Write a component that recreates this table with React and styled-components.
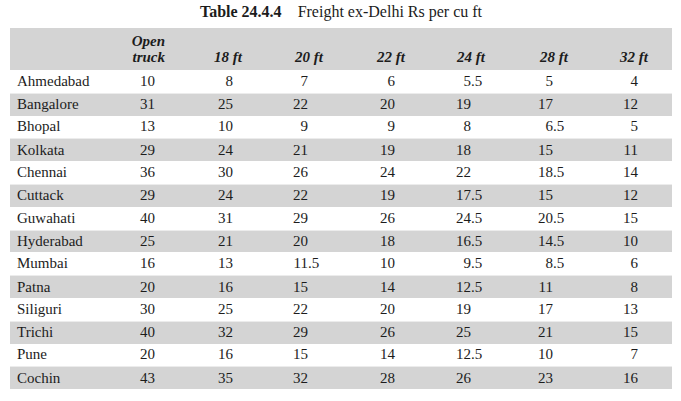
import styled, { createGlobalStyle } from "styled-components";

const GlobalStyle = createGlobalStyle`
  body {
    margin: 0;
    background: #ffffff;
    font-family: "Liberation Serif", "Times New Roman", serif;
    color: #1c1c1c;
  }
`;

const Page = styled.div`
  width: 681px;
  height: 401px;
  padding: 0 9px 0 10px;
  box-sizing: border-box;
`;

const Title = styled.div`
  height: 28px;
  line-height: 24px;
  font-size: 16px;
  text-align: center;

  > b {
    font-weight: bold;
    margin-right: 16px;
  }
`;

// column widths: city, open truck, 18, 20, 22, 24, 28, 32, trailing
const COLS = "110px 50px 77px 81px 82px 80px 83px 80px 1fr";

const HeadRow = styled.div`
  display: grid;
  grid-template-columns: ${COLS};
  height: 42px;
  background: #d4d4d4;
  align-items: end;
`;

const HeadCell = styled.div`
  font-weight: bold;
  font-style: italic;
  font-size: 15px;
  line-height: 16px;
  text-align: right;
  padding: 0 5px 5px 0;
`;

const Row = styled.div`
  display: grid;
  grid-template-columns: ${COLS};
  height: 22.8px;
  align-items: center;
  font-size: 15px;
  background: ${(p) => (p.$shaded ? "#d4d4d4" : "#ffffff")};
  border-top: ${(p) => (p.$shaded ? "1px solid #ececec" : "none")};
  box-sizing: border-box;
`;

const City = styled.div`
  padding-left: 7px;
`;

const Num = styled.div`
  display: flex;
  justify-content: flex-end;
  padding-right: ${(p) => p.$pad}px;
`;

const Frac = styled.span`
  display: inline-block;
  width: 10px;
  text-align: left;
`;

const pads = [5, 4, 10, 5, 9, 10, 5];

const headers = [
  <>
    Open
    <br />
    truck
  </>,
  "18 ft",
  "20 ft",
  "22 ft",
  "24 ft",
  "28 ft",
  "32 ft",
];

const data = [
  ["Ahmedabad", "10", "8", "7", "6", "5.5", "5", "4"],
  ["Bangalore", "31", "25", "22", "20", "19", "17", "12"],
  ["Bhopal", "13", "10", "9", "9", "8", "6.5", "5"],
  ["Kolkata", "29", "24", "21", "19", "18", "15", "11"],
  ["Chennai", "36", "30", "26", "24", "22", "18.5", "14"],
  ["Cuttack", "29", "24", "22", "19", "17.5", "15", "12"],
  ["Guwahati", "40", "31", "29", "26", "24.5", "20.5", "15"],
  ["Hyderabad", "25", "21", "20", "18", "16.5", "14.5", "10"],
  ["Mumbai", "16", "13", "11.5", "10", "9.5", "8.5", "6"],
  ["Patna", "20", "16", "15", "14", "12.5", "11", "8"],
  ["Siliguri", "30", "25", "22", "20", "19", "17", "13"],
  ["Trichi", "40", "32", "29", "26", "25", "21", "15"],
  ["Pune", "20", "16", "15", "14", "12.5", "10", "7"],
  ["Cochin", "43", "35", "32", "28", "26", "23", "16"],
];

function Value({ v, pad }) {
  const [whole, frac] = v.split(".");
  return (
    <Num $pad={pad}>
      <span>{whole}</span>
      <Frac>{frac ? "." + frac : ""}</Frac>
    </Num>
  );
}

export default function App() {
  return (
    <Page>
      <GlobalStyle />
      <Title>
        <b>Table 24.4.4</b>Freight ex-Delhi Rs per cu ft
      </Title>
      <HeadRow>
        <div />
        {headers.map((h, i) => (
          <HeadCell key={i}>{h}</HeadCell>
        ))}
        <div />
      </HeadRow>
      {data.map((r, i) => (
        <Row key={r[0]} $shaded={i % 2 === 1}>
          <City>{r[0]}</City>
          {r.slice(1).map((v, j) => (
            <Value key={j} v={v} pad={pads[j]} />
          ))}
          <div />
        </Row>
      ))}
    </Page>
  );
}
